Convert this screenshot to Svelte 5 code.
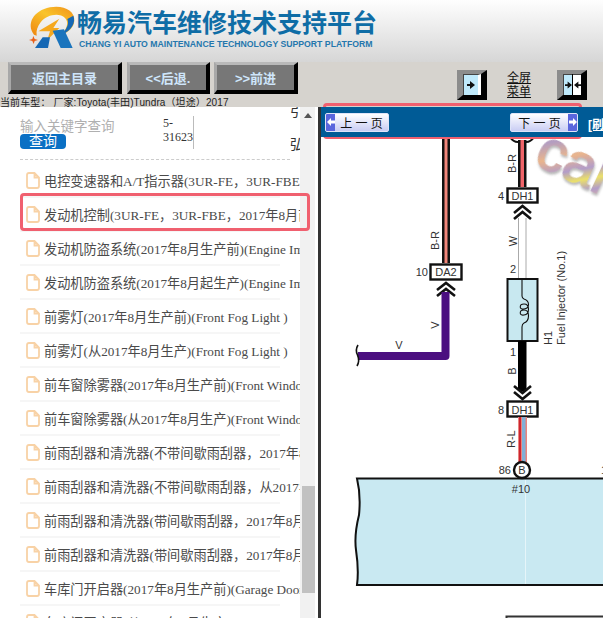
<script>
	const rows = [
		'电控变速器和A/T指示器(3UR-FE，3UR-FBE，2017年8月前)',
		'发动机控制(3UR-FE，3UR-FBE，2017年8月前生产)',
		'发动机防盗系统(2017年8月生产前)(Engine Immobiliser)',
		'发动机防盗系统(2017年8月起生产)(Engine Immobiliser)',
		'前雾灯(2017年8月生产前)(Front Fog Light )',
		'前雾灯(从2017年8月生产)(Front Fog Light )',
		'前车窗除雾器(2017年8月生产前)(Front Window Defogger)',
		'前车窗除雾器(从2017年8月生产)(Front Window Defogger)',
		'前雨刮器和清洗器(不带间歇雨刮器，2017年8月生产前)',
		'前雨刮器和清洗器(不带间歇雨刮器，从2017年8月生产)',
		'前雨刮器和清洗器(带间歇雨刮器，2017年8月生产前)',
		'前雨刮器和清洗器(带间歇雨刮器，2017年8月生产前)',
		'车库门开启器(2017年8月生产前)(Garage Door Opener)',
		'车库门开启器(从2017年8月生产)(Garage Door Opener)'
	];
</script>

<div class="page">
	<header class="brand">
		<svg class="logo" viewBox="0 0 168 144" width="56" height="48" aria-hidden="true">
			<defs>
				<linearGradient id="ring" x1="0" y1="1" x2="1" y2="0">
					<stop offset="0" stop-color="#ee8410" />
					<stop offset="0.55" stop-color="#f9c42a" />
					<stop offset="1" stop-color="#f0901a" />
				</linearGradient>
			</defs>
			<path d="M42 92 C18 60 40 20 90 10 C130 2 165 20 163 50 C162 70 145 85 125 92 C140 75 148 55 135 42 C118 25 80 32 62 55 C52 68 48 80 50 95 Z" fill="url(#ring)" />
			<path d="M160 35 C168 55 155 80 125 92 C140 75 148 60 142 45 Z" fill="#1668b4" />
			<path d="M55 82 L118 44 L100 72 L118 72 L82 108 L90 82 Z" fill="#f5a81e" />
			<path d="M40 96 l4 9 l10 3 l-10 3 l-3 9 l-4 -9 l-10 -3 l10 -3 Z" fill="#e8601a" />
			<path d="M45 132 L68 100 L90 100 L84 132 Z" fill="#1668b4" />
			<path d="M98 80 L132 76 L158 132 L122 132 Z" fill="#1a74bd" />
		</svg>
		<div class="brand-text">
			<div class="brand-title">畅易汽车维修技术支持平台</div>
			<div class="brand-sub">CHANG YI AUTO MAINTENANCE TECHNOLOGY SUPPORT PLATFORM</div>
		</div>
	</header>

	<div class="toolbar">
		<div class="toolbar-left">
			<div class="nav">
				<button class="bevel home">返回主目录</button>
				<button class="bevel back">&lt;&lt;后退.</button>
				<button class="bevel fwd">&gt;&gt;前进</button>
			</div>
			<div class="car">当前车型： 厂家:Toyota(丰田)Tundra（坦途）2017</div>
		</div>
		<div class="tools">
			<div class="tool">
				<span class="pane strip"><svg viewBox="0 0 8 8" width="8" height="8"><path d="M0 3 H3 V0 L8 4 L3 8 V5 H0 Z" fill="#111" /></svg></span>
			</div>
			<div class="full">全屏<br />菜单</div>
			<div class="tool">
				<span class="pane"><svg viewBox="0 0 8 8" width="7" height="8"><path d="M0 3 H3 V0 L8 4 L3 8 V5 H0 Z" fill="#111" /></svg></span>
				<span class="pane white"><svg viewBox="0 0 8 8" width="7" height="8"><path d="M8 3 H5 V0 L0 4 L5 8 V5 H8 Z" fill="#111" /></svg></span>
			</div>
		</div>
	</div>

	<main class="body">
		<aside class="side">
			<div class="list">
				<div class="search">
					<div class="search-box">
						<div class="hint">输入关键字查询</div>
						<button class="go">查询</button>
					</div>
					<div class="code">5-<br />31623</div>
					<div class="cut">
						<span>引</span>
						<span>弘</span>
					</div>
				</div>
				{#each rows as row}
					<div class="row">
						<svg class="doc" viewBox="0 0 14 17" width="14" height="17" aria-hidden="true">
							<path d="M1 3 Q1 1 3 1 H8.5 L13 5.5 V14 Q13 16 11 16 H3 Q1 16 1 14 Z M8.5 1 V5.5 H13" fill="none" stroke="#f8d2a6" stroke-width="1.8" />
						</svg>
						<span class="label">{row}</span>
					</div>
				{/each}
			</div>
			<div class="scrollbar">
				<svg class="up" viewBox="0 0 8 5" width="8" height="5"><path d="M0 5 L4 0 L8 5 Z" fill="#555" /></svg>
				<div class="thumb"></div>
			</div>
		</aside>

		<section class="view">
			<div class="pager">
				<button class="page-btn prev">
					<span class="cap">
						<svg viewBox="0 0 8 8" width="8" height="8"><path d="M0 4 L4 0 V2.5 H8 V5.5 H4 V8 Z" fill="#fff" /></svg>
					</span>
					<span class="page-text">上 一 页</span>
				</button>
				<button class="page-btn next">
					<span class="page-text">下 一 页</span>
					<span class="cap">
						<svg viewBox="0 0 8 8" width="8" height="8"><path d="M8 4 L4 0 V2.5 H0 V5.5 H4 V8 Z" fill="#fff" /></svg>
					</span>
				</button>
				<span class="refresh">[刷新]</span>
			</div>
			<!-- viewBox is in page coordinates so the wiring numbers read off the reference -->
			<svg class="diagram" viewBox="321 137 282 481" width="282" height="481">
				<defs>
					<linearGradient id="mark" gradientUnits="userSpaceOnUse" x1="535" y1="140" x2="560" y2="175" spreadMethod="reflect">
						<stop offset="0" stop-color="#a58db8" />
						<stop offset="0.4" stop-color="#e6a878" />
						<stop offset="0.75" stop-color="#a68cc0" />
						<stop offset="1" stop-color="#e8dc50" />
					</linearGradient>
					<filter id="soft" x="-10%" y="-10%" width="130%" height="130%">
						<feGaussianBlur in="SourceGraphic" stdDeviation="0.5" result="b" />
						<feDropShadow in="b" dx="1.5" dy="2" stdDeviation="1.2" flood-color="#777" flood-opacity="0.6" />
					</filter>
				</defs>

				<text class="mark" x="532.5" y="162.5" transform="rotate(25 532.5 162.5)" fill="url(#mark)" stroke="url(#mark)" filter="url(#soft)">car</text>

				<!-- left wire -->
				<rect x="442" y="137" width="8" height="126" fill="#111" />
				<rect x="444.5" y="137" width="3" height="126" fill="#f0857a" />
				<text class="lbl" transform="translate(439 250) rotate(-90)">B-R</text>
				<rect x="430.5" y="264.5" width="31" height="15" class="box" />
				<text class="lbl mid" x="446" y="276">DA2</text>
				<text class="lbl end" x="428" y="276">10</text>
				<path d="M437 290 L446 283 L455 290 M437 296 L446 289 L455 296" class="chev" />

				<!-- purple wire -->
				<path d="M358 356 H445.5 V292" fill="none" stroke="#4b0f80" stroke-width="8" stroke-linejoin="round" />
				<path d="M358 345 Q355 350 357.5 355 Q360 361 357 366" fill="none" stroke="#111" stroke-width="1.6" />
				<text class="lbl mid" x="399" y="349">V</text>
				<text class="lbl mid" transform="translate(439 325) rotate(-90)">V</text>

				<!-- right wire, top -->
				<path d="M510 137 Q513 142 518 142 H526 Q531 142 534 137" fill="none" stroke="#111" stroke-width="2" />
				<rect x="518" y="140" width="8.5" height="47" fill="#111" />
				<rect x="520.5" y="140" width="3.5" height="47" fill="#f0656a" />
				<text class="lbl" transform="translate(516 173) rotate(-90)">B-R</text>
				<rect x="507.5" y="188.5" width="30" height="14" class="box" />
				<text class="lbl mid" x="522.5" y="200">DH1</text>
				<text class="lbl end" x="504" y="200">4</text>

				<rect x="518" y="218" width="8.5" height="61" fill="#fff" />
				<path d="M518.5 218 V279 M526 218 V279" stroke="#aaa" stroke-width="1" fill="none" />
				<path d="M514 213 L522.5 206 L531 213 M514 219 L522.5 212 L531 219" class="chev" />
				<text class="lbl mid" transform="translate(517 241) rotate(-90)">W</text>
				<text class="lbl mid" x="513" y="273">2</text>

				<!-- injector -->
				<rect x="507.5" y="279" width="30" height="62" fill="#c8e8f0" stroke="#111" stroke-width="2" />
				<path d="M522 279 V296 Q522 298 524 299 C530 301 530 308 524 309 C519 310 519 304 524 304 C530 304 530 314 524 315 C519 316 519 310 524 310 C530 310 530 321 524 323 Q522 324 522 327 V341" fill="none" stroke="#111" stroke-width="1.1" />
				<text class="lbl" transform="translate(552 345) rotate(-90)">H1</text>
				<text class="lbl" transform="translate(565 345) rotate(-90)">Fuel Injector (No.1)</text>

				<!-- black wire and lower connector -->
				<rect x="518" y="341" width="8.5" height="50" fill="#000" />
				<text class="lbl mid" x="513" y="356">1</text>
				<text class="lbl mid" transform="translate(516 371) rotate(-90)">B</text>
				<path d="M514 386 L522.5 393 L531 386 M514 392 L522.5 399 L531 392" class="chev" />
				<rect x="507.5" y="401.5" width="30" height="15" class="box" />
				<text class="lbl mid" x="522.5" y="413.5">DH1</text>
				<text class="lbl end" x="504" y="413.5">8</text>

				<rect x="518" y="417" width="9" height="46" fill="#e9857f" />
				<rect x="519" y="417" width="2" height="46" fill="#cc2530" />
				<rect x="522" y="417" width="3.5" height="46" fill="#7fb0d8" />
				<text class="lbl" transform="translate(515 448) rotate(-90)">R-L</text>

				<!-- ECU block -->
				<path d="M357 478.5 H610 V585 H357 Q359 570 356 550 Q354 535 359 515 Q361 495 357 478.5 Z" fill="#c9e9f2" stroke="#111" stroke-width="2" />
				<path d="M525.5 480 V584" stroke="#e6f5f9" stroke-width="1" />
				<circle cx="522" cy="470" r="8" fill="#fff" stroke="#111" stroke-width="2.4" />
				<text class="lbl mid" x="522" y="474">B</text>
				<text class="lbl end" x="511" y="474">86</text>
				<text class="lbl mid" x="521" y="493">#10</text>
				<text class="lbl" x="601" y="474">1</text>
				<path d="M506.5 618 V616.5 H610" fill="none" stroke="#333" stroke-width="2" />
			</svg>
		</section>
	</main>

	<div class="flag one"></div>
	<div class="flag two"></div>
</div>

<style>
	:global(body) {
		overflow: hidden;
	}
	.page {
		position: relative;
		width: 603px;
		height: 618px;
		overflow: hidden;
		font-family: "Liberation Sans", "Noto Sans CJK SC", sans-serif;
		background: #fff;
	}
	.brand {
		height: 62px;
		box-sizing: border-box;
		padding: 4px 0 0 20px;
		display: flex;
		gap: 1px;
		align-items: flex-start;
		background: linear-gradient(#fefefe, #f2f2f2 30%, #d6d6d6);
	}
	.brand-text {
		padding-top: 6px;
	}
	.brand-title {
		font-size: 25px;
		line-height: 27px;
		font-weight: 700;
		color: #0f6da6;
		white-space: nowrap;
	}
	.brand-sub {
		margin-top: 1px;
		padding-left: 2px;
		font-size: 8.7px;
		line-height: 12px;
		font-weight: 700;
		color: #2577ad;
		white-space: nowrap;
	}
	.toolbar {
		height: 45px;
		background: #d6d3ce;
		display: flex;
	}
	.toolbar-left {
		width: 457px;
	}
	.nav {
		display: flex;
		padding-left: 8px;
		gap: 5px;
	}
	.bevel {
		height: 32px;
		padding: 0;
		box-sizing: border-box;
		border-style: solid;
		border-width: 3px 4px 4px 3px;
		border-color: #b9b9b9 #000 #000 #a8a8a8;
		background: #777;
		color: #cfe6fb;
		font: 700 13px "Liberation Sans", "Noto Sans CJK SC", sans-serif;
	}
	.home { width: 114px; }
	.back { width: 83px; }
	.fwd { width: 84px; margin-left: -1px; }
	.car {
		margin-top: 2px;
		font-size: 10px;
		line-height: 13px;
		letter-spacing: 0.1px;
		color: #222;
		white-space: nowrap;
	}
	.tools {
		display: flex;
		align-items: flex-start;
		padding-top: 8px;
	}
	.tool {
		width: 30px;
		height: 30px;
		box-sizing: border-box;
		border-style: solid;
		border-width: 4px 6px 5px 6px;
		border-color: #8c8c8c #000 #000 #8c8c8c;
		display: flex;
		background: #000;
		gap: 1px;
	}
	.pane {
		flex: 1;
		min-width: 0;
		display: flex;
		align-items: center;
		justify-content: center;
		box-sizing: border-box;
		border-top: 1px solid #444;
		border-left: 1px solid #444;
		background: #bfe9fb;
	}
	.pane.white {
		background: #fff;
		border-left: 0;
	}
	.strip {
		border-right: 3px solid #fff;
	}
	.full {
		width: 70px;
		box-sizing: border-box;
		padding: 2px 0 0 20px;
		font-size: 12px;
		line-height: 13.5px;
		color: #111;
		text-decoration: underline;
	}
	.body {
		height: 511px;
		display: flex;
	}
	.side {
		width: 318px;
		display: flex;
		flex: none;
		border-right: 3px solid #333;
	}
	.list {
		width: 300px;
		overflow: hidden;
	}
	.search {
		position: relative;
		height: 52px;
		margin-left: 20px;
		width: 270px;
		border-bottom: 1px dashed #ccc;
	}
	.search-box {
		padding-top: 13px;
	}
	.hint {
		font-size: 13.5px;
		line-height: 14px;
		color: #b0b0b0;
	}
	.go {
		display: block;
		width: 46px;
		height: 15px;
		padding: 0;
		border: 0;
		border-radius: 4px;
		background: #0a70c4;
		color: #fff;
		font: 14px/15px "Liberation Sans", "Noto Sans CJK SC", sans-serif;
	}
	.code {
		position: absolute;
		left: 143px;
		top: 9px;
		width: 30px;
		height: 33px;
		border-right: 1px solid #bbb;
		font: 12px/14px "Liberation Serif", "Noto Sans CJK SC", serif;
		color: #333;
	}
	.cut {
		position: absolute;
		left: 270px;
		top: -3px;
		width: 10px;
		height: 50px;
		overflow: hidden;
		display: flex;
		flex-direction: column;
		gap: 19px;
		font-size: 14px;
		line-height: 14px;
		color: #333;
	}
	.row {
		height: 34px;
		box-sizing: border-box;
		margin-left: 20px;
		width: 260px;
		padding-left: 6px;
		display: flex;
		align-items: center;
		gap: 4px;
		border-bottom: 2px solid #f6f6f6;
		white-space: nowrap;
	}
	.search + .row {
		margin-top: 4px;
	}
	.doc {
		flex: none;
	}
	.label {
		font: 13.2px "Liberation Serif", "Noto Sans CJK SC", serif;
		color: #4a4a4a;
	}
	.scrollbar {
		position: relative;
		width: 15px;
		background: #f1f1f1;
	}
	.up {
		position: absolute;
		left: 4px;
		top: 6px;
	}
	.thumb {
		position: absolute;
		left: 2px;
		right: 0;
		top: 379px;
		height: 107px;
		background: #c1c1c1;
	}
	.view {
		flex: 1;
		min-width: 0;
		overflow: hidden;
	}
	.pager {
		position: relative;
		z-index: 1;
		height: 30px;
		background: #005b96;
		display: flex;
		align-items: center;
		padding-left: 4px;
	}
	.page-btn {
		flex: none;
		display: flex;
		align-items: center;
		height: 19px;
		padding: 0;
		border: 1px solid #dfe4f8;
		border-radius: 2px;
		background: linear-gradient(#fff, #c9cdf4);
		overflow: hidden;
	}
	.prev { width: 64px; }
	.next { width: 68px; margin-left: 121px; }
	.page-text {
		flex: 1;
		font: 12px "Liberation Sans", "Noto Sans CJK SC", sans-serif;
		color: #111;
		white-space: nowrap;
	}
	.cap {
		flex: none;
		width: 9px;
		height: 100%;
		display: flex;
		align-items: center;
		justify-content: center;
		background: #5a66dd;
	}
	.refresh {
		flex: none;
		margin: 3px 0 0 10px;
		font-size: 12px;
		font-weight: 700;
		color: #fff;
		text-decoration: underline;
		white-space: nowrap;
	}
	.diagram {
		display: block;
	}
	.lbl {
		font: 11px "Liberation Sans", sans-serif;
		fill: #333;
	}
	.mid {
		text-anchor: middle;
	}
	.end {
		text-anchor: end;
	}
	.box {
		fill: #fff;
		stroke: #111;
		stroke-width: 2.4;
	}
	.chev {
		fill: none;
		stroke: #111;
		stroke-width: 2.6;
	}
	.mark {
		font: 58px "Liberation Sans", sans-serif;
		stroke-width: 1.5;
		opacity: 0.85;
	}
	.flag {
		position: absolute;
		box-sizing: border-box;
		border: 3px solid #f0606f;
		border-radius: 4px;
		pointer-events: none;
	}
	.one {
		left: 20px;
		top: 193px;
		width: 290px;
		height: 38px;
	}
	.two {
		left: 323px;
		top: 103px;
		width: 259px;
		height: 36px;
	}
</style>
